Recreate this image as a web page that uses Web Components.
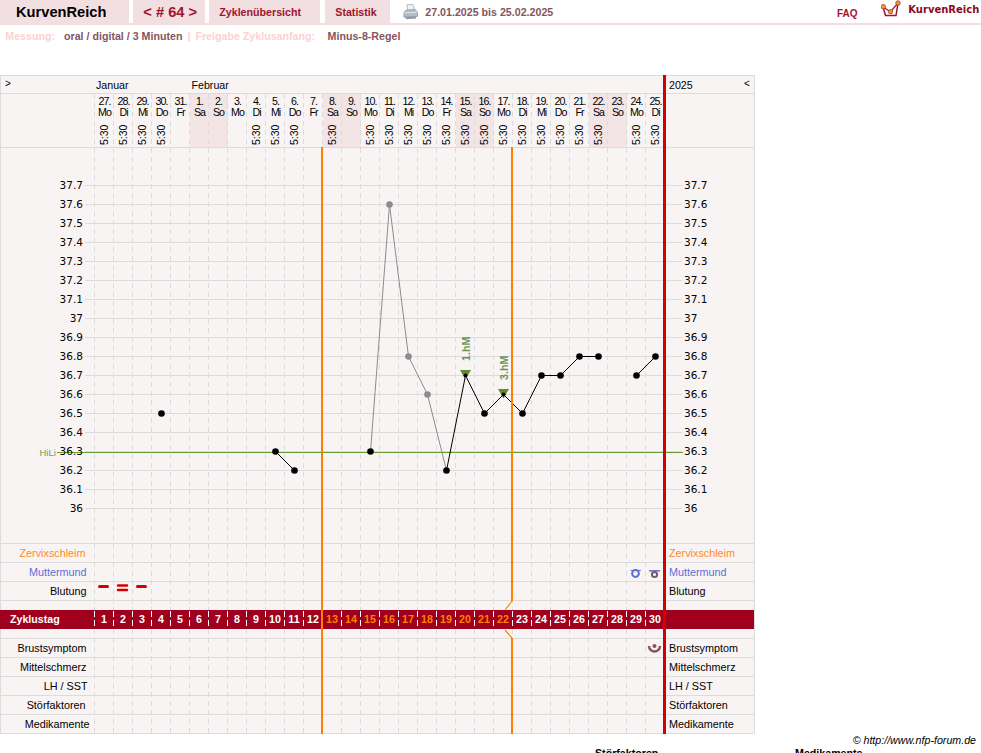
<!DOCTYPE html>
<html lang="de">
<head>
<meta charset="utf-8">
<title>KurvenReich</title>
<style>
  html, body { margin: 0; background: #fff; overflow: hidden; height: 753px; }
  body { font-family: "Liberation Sans", Arial, sans-serif; font-size: 10.67px; color: #000; }
</style>
</head>
<body>
<kr-nav></kr-nav>
<kr-meta></kr-meta>
<kr-chart></kr-chart>
<kr-foot></kr-foot>

<script>
const LABEL_W = 94.5, COL_W = 19, DAYS = 30;
const colX = d => LABEL_W + 0.5 + COL_W * (d - 0.5);
const tempY = t => 185.5 + Math.round((37.7 - t) * 10) * 19;
const DASH = '#dcdcdc';

class KrNav extends HTMLElement {
  constructor() {
    super();
    this.attachShadow({ mode: 'open' });
    this.shadowRoot.innerHTML = `
      <style>
        :host { display: flex; height: 23px; border-bottom: 2px solid #f2dfe1; font-weight: bold; color: #a0142d; font-size: 10.67px; }
        .tab { background: #f2dfe1; display: flex; align-items: center; height: 23px; box-sizing: border-box; padding-left: 10px; }
        .brand { width: 129px; margin-right: 4.3px; padding-left: 16px; color: #000; font-size: 14.67px; }
        .num { width: 72px; margin-right: 4px; font-size: 14.67px; }
        .over { width: 110.3px; margin-right: 5.7px; }
        .stat { width: 65px; }
        .printer { margin: 4px 0 0 13px; width: 15px; height: 16px; }
        .range { margin-left: 7px; color: #84565c; line-height: 24px; }
        .faq { margin-left: auto; margin-right: 23.7px; line-height: 28px; font-size: 10px; }
        .logo { width: 20px; height: 20px; margin-right: 7px; }
        .name { font-family: "DejaVu Sans", sans-serif; font-size: 10px; color: #8c0a22; line-height: 20px; margin-right: 1.7px; }
      </style>
      <div class="tab brand">KurvenReich</div>
      <div class="tab num">&lt; # 64 &gt;</div>
      <div class="tab over">Zyklenübersicht</div>
      <div class="tab stat">Statistik</div>
      <svg class="printer" viewBox="0 0 16 20" preserveAspectRatio="none">
        <path d="M4 1 L10.500 .5 L12.500 8 L5.500 9 Z" fill="#f0f3f6" stroke="#8a94a0" stroke-width=".7"/>
        <path d="M1 10 L4 7.500 L13 7 L15.500 10 L15.500 15.500 L1 16.500 Z" fill="#b4bcc6" stroke="#78828e" stroke-width=".7"/>
        <path d="M1 11 L15.500 10.200" stroke="#e8ebf0" stroke-width="1"/>
        <path d="M3 16.200 L14 15.500 L14 18 L3 19 Z" fill="#8f99a5"/>
      </svg>
      <div class="range">27.01.2025 bis 25.02.2025</div>
      <div class="faq">FAQ</div>
      <svg class="logo" viewBox="0 0 20 20">
        <path d="M2 7 L4.500 15.500 H15 L17 3" fill="none" stroke="#a0142d" stroke-width="1.500"/>
        <path d="M2 7 L9.500 11.700 L17 3" fill="none" stroke="#a0142d" stroke-width="1.200"/>
        <circle cx="2.300" cy="6.700" r="2.300" fill="#f09a1e" stroke="#a0142d" stroke-width=".6"/>
        <circle cx="9.500" cy="11.700" r="2.200" fill="#f09a1e" stroke="#a0142d" stroke-width=".6"/>
        <circle cx="17" cy="3" r="2.300" fill="#f09a1e" stroke="#a0142d" stroke-width=".6"/>
      </svg>
      <div class="name">KurvenReich</div>`;
  }
}
customElements.define('kr-nav', KrNav);

class KrMeta extends HTMLElement {
  constructor() {
    super();
    this.attachShadow({ mode: 'open' });
    this.shadowRoot.innerHTML = `
      <style>
        :host { display: flex; height: 50px; padding: 4px 0 0 5.3px; box-sizing: border-box; font-size: 10.67px; font-weight: bold; color: #84565c; line-height: 14px; white-space: nowrap; }
        i { font-style: normal; color: #fbd2d2; }
      </style>
      <i>Messung:</i>
      <span style="margin-left:9px">oral / digital / 3 Minuten</span>
      <i style="margin-left:5px">|</i>
      <i style="margin-left:5px">Freigabe Zyklusanfang:</i>
      <span style="margin-left:12.5px">Minus-8-Regel</span>`;
  }
}
customElements.define('kr-meta', KrMeta);

// one horizontal band of the chart: label, empty day cells, right label
class KrRow extends HTMLElement {
  constructor() {
    super();
    this.attachShadow({ mode: 'open' });
  }
  connectedCallback() {
    const label = this.getAttribute('label') || '';
    const color = this.getAttribute('color') || '#000';
    const h = this.getAttribute('h') || 19;
    const pad = this.getAttribute('pad') || 8;
    const line = this.hasAttribute('plain') ? 'none' : '1px solid #dcdcdc';
    this.shadowRoot.innerHTML = `
      <style>
        :host { display: grid; grid-template-columns: 93.5px 570px 1fr; height: ${h}px; box-sizing: border-box; border-bottom: ${line}; color: ${color}; font-size: 10.8px; line-height: ${h - 1}px; }
        .l { text-align: right; padding-right: ${pad}px; white-space: nowrap; }
        .r { padding-left: 4.5px; white-space: nowrap; }
      </style>
      <div class="l">${label}</div>
      <div></div>
      <div class="r">${label}</div>`;
  }
}
customElements.define('kr-row', KrRow);

class KrDates extends HTMLElement {
  constructor() {
    super();
    this.attachShadow({ mode: 'open' });
    const names = ['Mo','Di','Mi','Do','Fr','Sa','So'];
    const skip = new Set([5,6,7,8,12,14,28]); // days with no measuring time
    let cells = '';
    for (let d = 1; d <= DAYS; d++) {
      const date = d <= 5 ? d + 26 : d - 5;
      const wd = names[(d - 1) % 7];
      const weekend = wd === 'Sa' || wd === 'So';
      cells += `<div class="c${weekend ? ' we' : ''}"><div class="d">${date}.<br>${wd}</div>${skip.has(d) ? '' : '<div class="t">5:30</div>'}</div>`;
    }
    this.shadowRoot.innerHTML = `
      <style>
        :host { display: block; background: #f9f4f4; }
        .months { height: 17px; border-bottom: 1px solid #dcdcdc; display: grid; grid-template-columns: 93.5px 95px 475px 1fr 20px; line-height: 18px; font-size: 10.67px; }
        .months div { white-space: nowrap; }
        .arrow { padding-left: 4px; line-height: 15px; font-size: 10px; }
        .end { padding-left: 10px; }
        .y { padding-left: 4.5px; }
        .m1 { padding-left: 1.5px; }
        .m2 { padding-left: 2px; }
        .row { display: grid; grid-template-columns: 93.5px repeat(30, 19px) 1fr; height: 53px; border-bottom: 1px solid #dcdcdc; }
        .c { text-align: center; font-size: 10.67px; line-height: 11px; letter-spacing: -1px; position: relative; }
        .we { background: #f3e4e6; }
        .d { padding: 2px 0 0 1px; }
        .t { position: absolute; left: 0; right: 0; top: 30px; height: 21px; writing-mode: vertical-rl; transform: rotate(180deg); line-height: 19px; letter-spacing: 0; font-size: 10.5px; text-align: left; }
      </style>
      <div class="months"><div class="arrow">&gt;</div><div class="m1">Januar</div><div class="m2">Februar</div><div class="y">2025</div><div class="arrow end">&lt;</div></div>
      <div class="row"><div></div>${cells}<div></div></div>`;
  }
}
customElements.define('kr-dates', KrDates);

class KrGraph extends HTMLElement {
  constructor() {
    super();
    this.attachShadow({ mode: 'open' });
    const temps = [];
    for (let i = 0; i <= 17; i++) temps.push(Math.round((37.7 - i / 10) * 10) / 10);
    const y = t => tempY(t) - 148;
    const grid = temps.map(t => `<line x1="85" x2="682" y1="${y(t)}" y2="${y(t)}" stroke="#dcdcdc"/>`).join('');
    const left = temps.map(t => `<text x="83" y="${y(t) + 3.5}" text-anchor="end">${t}</text>`).join('');
    const right = temps.map(t => `<text x="684" y="${y(t) + 3.5}">${t}</text>`).join('');
    // dashes live here so that the curve is drawn over them; start at the header's y to keep the phase
    let dashes = '';
    for (let d = 0; d < DAYS; d++) {
      const x = LABEL_W + COL_W * d;
      dashes += `<line x1="${x}" x2="${x}" y1="-54" y2="395" stroke="${DASH}" stroke-dasharray="5 4"/>`;
    }
    const poly = (list, col) => `<polyline points="${list.map(p => colX(p[0]) + ',' + y(p[1])).join(' ')}" fill="none" stroke="${col}" stroke-width="1"/>`;
    const dot = (p, col, r) => `<circle cx="${colX(p[0])}" cy="${y(p[1])}" r="${r}" fill="${col}"/>`;
    const black = [[4,36.5],[10,36.3],[11,36.2],[15,36.3],[19,36.2],[21,36.5],[23,36.5],[24,36.7],[25,36.7],[26,36.8],[27,36.8],[29,36.7],[30,36.8]];
    const gray = [[16,37.6],[17,36.8],[18,36.6]];
    const tri = (d, t) => { const cx = colX(d), cy = y(t); return `<polygon points="${cx - 5.5},${cy - 5.5} ${cx + 5.5},${cy - 5.5} ${cx},${cy + 4}" fill="#5d8c2c"/>`; };
    const hm = (d, t, s) => `<text transform="translate(${colX(d) + 4},${y(t) - 14.5}) rotate(-90)" fill="#6d9455" font-family="Liberation Sans" font-weight="bold" font-size="10.67">${s}</text>`;
    this.shadowRoot.innerHTML = `
      <style>
        :host { display: block; height: 395px; background: #f9f4f4; border-bottom: 1px solid #dcdcdc; }
        svg { display: block; width: 753px; height: 395px; font-family: "DejaVu Sans", sans-serif; font-size: 10.5px; }
      </style>
      <svg viewBox="1 0 753 395">
        ${dashes}
        ${grid}
        <line x1="57" x2="683" y1="${y(36.3) + 1}" y2="${y(36.3) + 1}" stroke="#6a9c34"/>
        <text x="39.500" y="${y(36.3) + 4}" fill="#7a9a52" font-family="Liberation Sans" font-size="9.5">HiLi</text>
        ${left}${right}
        ${poly([[15,36.3],[16,37.6],[17,36.8],[18,36.6],[19,36.2]], '#8c8c8c')}
        ${poly([[10,36.3],[11,36.2]], '#000')}
        ${poly([[19,36.2],[20,36.7],[21,36.5],[22,36.6],[23,36.5],[24,36.7],[25,36.7],[26,36.8],[27,36.8]], '#000')}
        ${poly([[29,36.7],[30,36.8]], '#000')}
        ${tri(20,36.7)}${tri(22,36.6)}
        ${hm(20,36.7,'1.hM')}${hm(22,36.6,'3.hM')}
        ${gray.map(p => dot(p, '#8c8c8c', 3.3)).join('')}
        ${black.map(p => dot(p, '#000', 3.3)).join('')}
        ${dot([20,36.7], '#000', 2)}${dot([22,36.6], '#000', 2)}
      </svg>`;
  }
}
customElements.define('kr-graph', KrGraph);

class KrDayBar extends HTMLElement {
  constructor() {
    super();
    this.attachShadow({ mode: 'open' });
    let cells = '';
    for (let d = 1; d <= DAYS; d++) cells += `<span class="${d >= 13 && d <= 22 ? 'o' : ''}">${d}</span>`;
    this.shadowRoot.innerHTML = `
      <style>
        :host { display: grid; grid-template-columns: 93.5px repeat(30, 19px) 1fr; height: 19px; background: #a0001e; color: #fff; font-weight: bold; font-size: 10.67px; line-height: 19px; margin-left: -1px; padding-left: 1px; }
        .z { padding-left: 9px; }
        span { text-align: center; }
        .o { color: #ff8000; }
      </style>
      <div class="z">Zyklustag</div>${cells}<div></div>`;
  }
}
customElements.define('kr-daybar', KrDayBar);

class KrChart extends HTMLElement {
  constructor() {
    super();
    this.attachShadow({ mode: 'open' });
    let dashes = '';
    for (let d = 0; d < DAYS; d++) {
      const x = LABEL_W + COL_W * d;
      dashes += `<line x1="${x}" x2="${x}" y1="94" y2="148" stroke="${DASH}" stroke-dasharray="5 4"/>`;
      dashes += `<path d="M${x} 544 V610 M${x} 629 V734" stroke="${DASH}" stroke-dasharray="5 4" fill="none"/>`;
      dashes += `<line x1="${x}" x2="${x}" y1="611" y2="629" stroke="#fff" stroke-dasharray="6 3"/>`;
    }
    this.shadowRoot.innerHTML = `
      <style>
        :host { display: block; position: relative; width: 755px; box-sizing: border-box; background: #f9f4f4; border: solid #dcdcdc; border-width: 1px 1px 0 1px; }
        svg { position: absolute; left: -1px; top: -76px; width: 755px; height: 734px; pointer-events: none; }
      </style>
      <kr-dates></kr-dates>
      <kr-graph></kr-graph>
      <kr-row label="Zervixschleim" color="#ff8a1e" pad="9"></kr-row>
      <kr-row label="Muttermund" color="#5a70d6"></kr-row>
      <kr-row label="Blutung"></kr-row>
      <kr-row h="9" plain></kr-row>
      <kr-daybar></kr-daybar>
      <kr-row h="10"></kr-row>
      <kr-row label="Brustsymptom"></kr-row>
      <kr-row label="Mittelschmerz"></kr-row>
      <kr-row label="LH / SST" pad="7"></kr-row>
      <kr-row label="Störfaktoren" pad="9"></kr-row>
      <kr-row label="Medikamente" pad="5"></kr-row>
      <svg viewBox="0 0 755 734">
        ${dashes}
        <path d="M322 147 V734" stroke="#ff8000" stroke-width="2" fill="none"/>
        <path d="M512 147 V601 M512 638 V734" stroke="#ff8000" stroke-width="2" fill="none"/>
        <path d="M512 601 L505 610 M505 630 L512 638" stroke="#ff8000" stroke-width="1.200" fill="none"/>
        <path d="M664.500 75 V734" stroke="#d40000" stroke-width="3"/>
        <path d="M99.500 586.500 H107.500 M137.500 586.500 H145.500" stroke="#d40000" stroke-width="3" stroke-linecap="round"/>
        <path d="M118 585.500 H127 M118 590 H127" stroke="#d40000" stroke-width="2.500" stroke-linecap="round"/>
        <g fill="none" stroke="#5a70d6"><circle cx="635.500" cy="573.500" r="3.400" stroke-width="2"/><path d="M630.700 570.500 H640.700" stroke-width="1.200"/></g>
        <g fill="none"><path d="M649 570.800 H660" stroke="#5a70d6" stroke-width="1.500"/><circle cx="654.500" cy="574.500" r="2.600" stroke="#7d5a60" stroke-width="2"/></g>
        <path d="M649 646 a5.500 5.500 0 0 0 11 0" fill="none" stroke="#84565c" stroke-width="2.400"/>
        <circle cx="654.500" cy="646" r="2" fill="#84565c"/>
      </svg>`;
  }
}
customElements.define('kr-chart', KrChart);

class KrFoot extends HTMLElement {
  constructor() {
    super();
    this.attachShadow({ mode: 'open' });
    this.shadowRoot.innerHTML = `
      <style>
        :host { display: block; font-size: 10.67px; height: 19px; }
        .c { text-align: right; padding-right: 5px; font-style: italic; line-height: 13px; }
        .cols { display: grid; grid-template-columns: 595px 200px 1fr; font-weight: bold; line-height: 13px; }
      </style>
      <div class="c">© http://www.nfp-forum.de</div>
      <div class="cols"><div></div><div>Störfaktoren</div><div>Medikamente</div></div>`;
  }
}
customElements.define('kr-foot', KrFoot);
</script>
</body>
</html>
